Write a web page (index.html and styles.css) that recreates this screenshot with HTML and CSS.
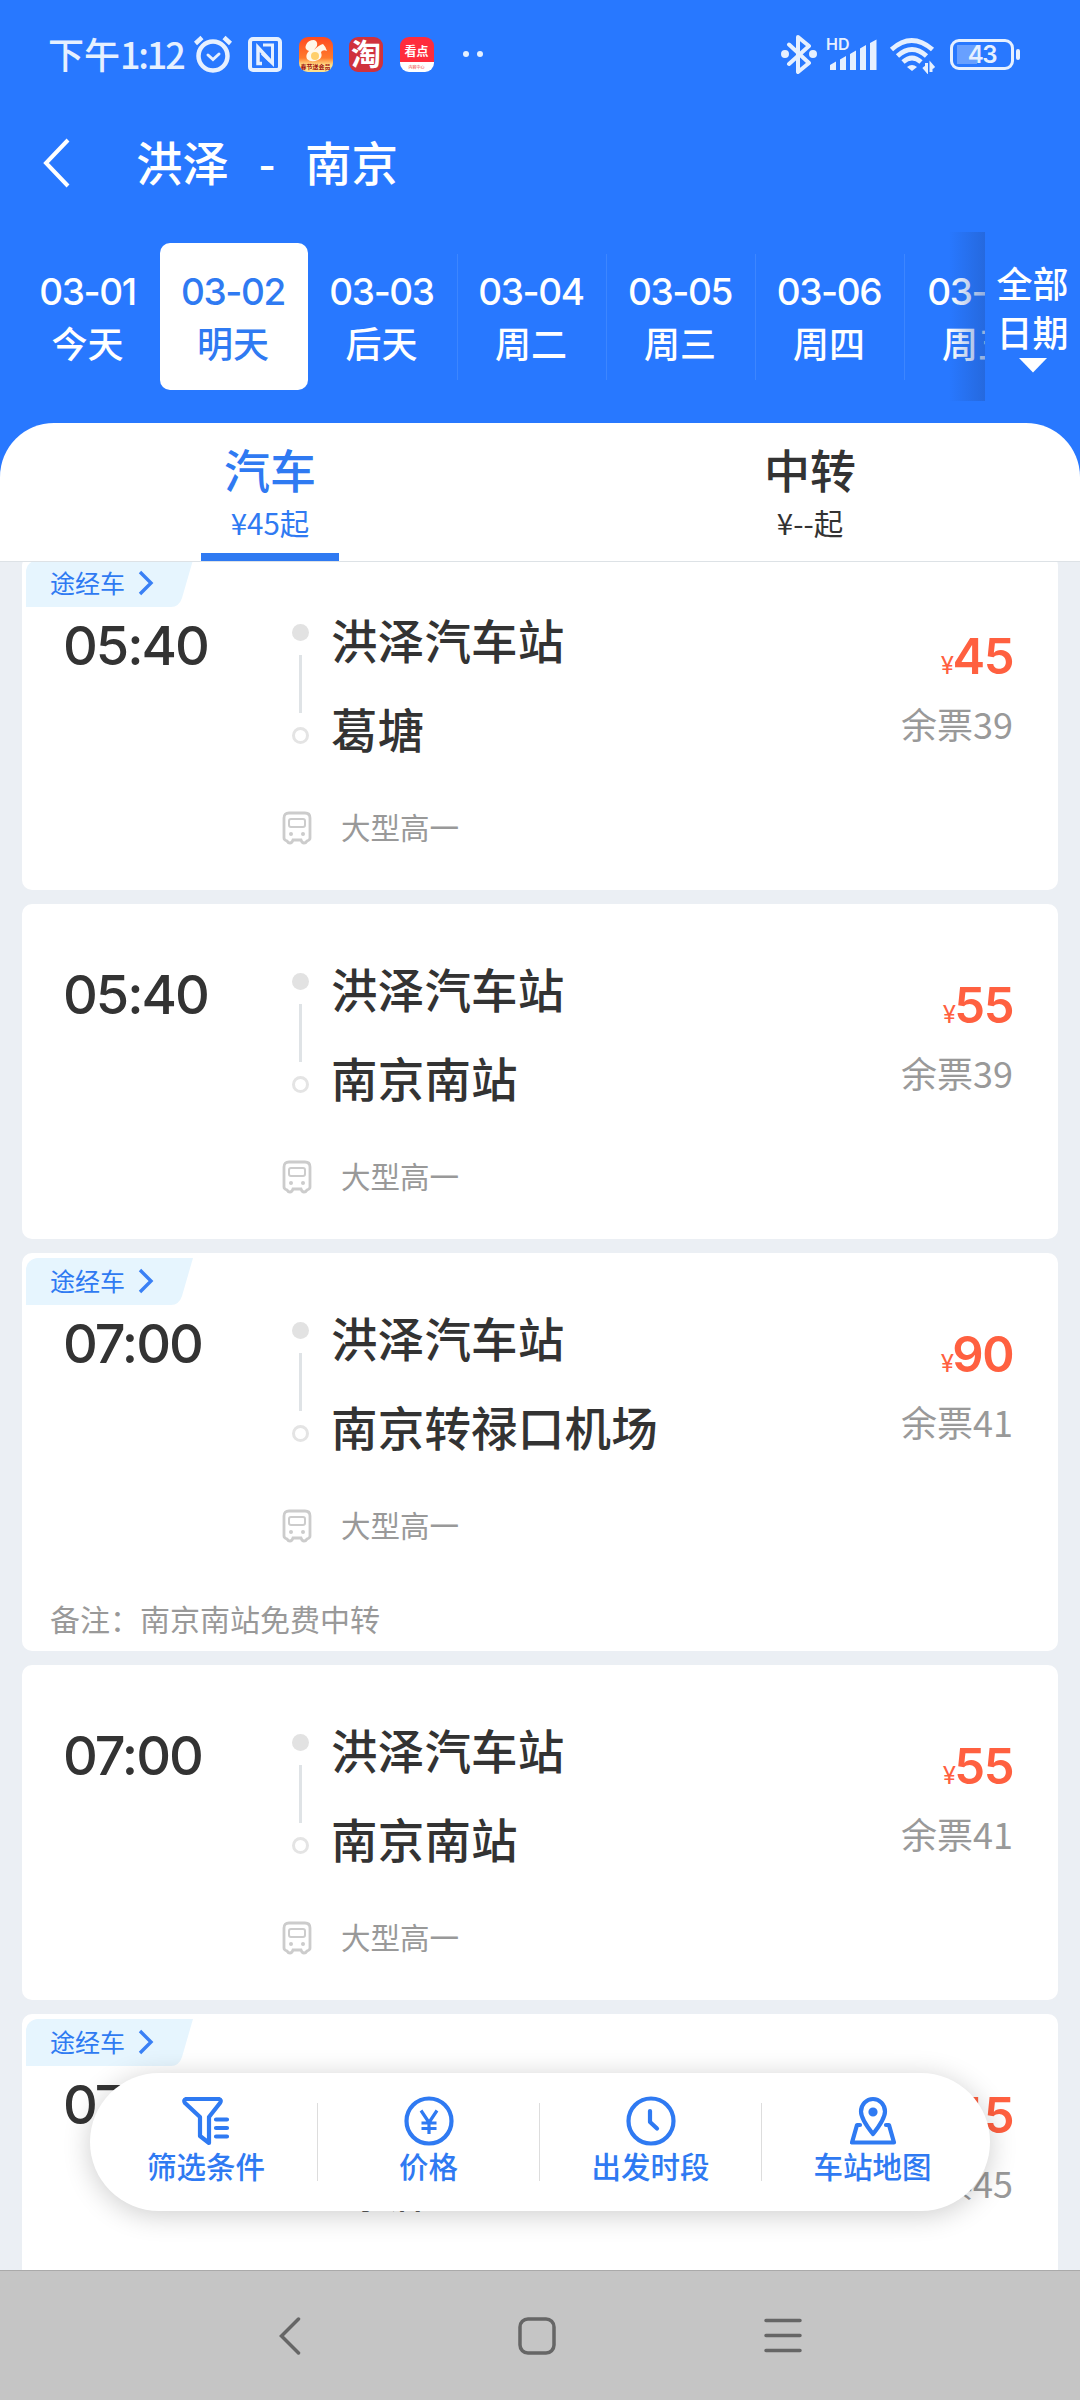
FILE: index.html
```html
<!DOCTYPE html>
<html lang="zh-CN">
<head>
    <meta charset="UTF-8">
    <meta name="viewport" content="width=device-width, initial-scale=1.0">
    <title>洪泽 - 南京</title>
    <link rel="stylesheet" href="styles.css">
</head>
<body>
    <!-- shared icons -->
    <svg class="icon-defs" width="0" height="0">
        <symbol id="icon-bus" viewBox="0 0 30 34">
            <path d="M7 2h16q5 0 5 5v20q0 2-3 3-1 2-3 2t-3-3h-8q-1 3-3 3t-3-2q-3-1-3-3V7q0-5 5-5z" fill="none" stroke="#ccc" stroke-width="2.8"/>
            <rect x="7" y="8" width="16" height="8" rx="2" fill="none" stroke="#ccc" stroke-width="2"/>
            <circle cx="9" cy="23" r="2" fill="#ccc"/>
            <circle cx="21" cy="23" r="2" fill="#ccc"/>
        </symbol>
        <symbol id="icon-more" viewBox="0 0 16 26">
            <path d="M2 2l11 11L2 24" fill="none" stroke="#3a80f5" stroke-width="3.4"/>
        </symbol>
    </svg>

    <div class="phone">
        <header class="header">
            <div class="status-bar">
                <div class="clock">下午<span class="clock-num">1:12</span></div>
                <svg class="alarm" width="40" height="38" viewBox="0 0 40 38" fill="none" stroke="#e6f0ff" stroke-linecap="round">
                    <circle cx="20" cy="21" r="14.5" stroke-width="4.5"/>
                    <path d="M15 20l5 4.500 6-5.500" stroke-width="3"/>
                    <path d="M2.500 8.500l6.500-6M37.500 8.500l-6.500-6" stroke-width="4.500" stroke-linecap="butt"/>
                </svg>
                <svg class="nfc" width="34" height="35" viewBox="0 0 34 35" fill="none" stroke="#e6f0ff">
                    <rect x="2" y="2" width="30" height="31" rx="3" stroke-width="4"/>
                    <path d="M14 26.500H10V10.500L22 23.500" stroke-width="3.500"/>
                    <path d="M15 8h9.500v18.500L14 16.500" stroke-width="3"/>
                </svg>
                <div class="app app-uc">
                    <svg width="34" height="35" viewBox="0 0 34 35">
                        <path d="M7 8q2-5 8-5 4 1 3 6l-3 4q5-5 9-6 3 3 4 7-4-2-6 1 2 6-3 8-7 3-11-1-2-4 2-8-5-2-3-6z" fill="#fff8ea"/>
                        <circle cx="16" cy="19" r="4" fill="#ffcf6b"/>
                    </svg>
                    <span>春节送会员</span>
                </div>
                <div class="app app-tao">淘</div>
                <div class="app app-kan"><b>看点</b><span>内容中心</span></div>
                <div class="more-dots"><i></i><i></i></div>

                <div class="status-right">
                    <svg class="bt" width="36" height="40" viewBox="0 0 36 40" fill="none" stroke="#e6f0ff" stroke-width="4" stroke-linejoin="round" stroke-linecap="round">
                        <path d="M8 10.500l20 18.500-11 9V3l11 9L8 30"/>
                        <circle cx="4" cy="20" r="2" fill="#e6f0ff"/>
                        <circle cx="32" cy="20" r="2" fill="#e6f0ff"/>
                    </svg>
                    <div class="signal">
                        <span class="hd">HD</span>
                        <svg width="52" height="40" viewBox="0 0 52 40" fill="#e6f0ff">
                            <path d="M3 31l6-3.500v8.500H3zM13 25.500l6-3.500v14h-6zM23 20l6-3.500V36h-6zM33 14.500l6-3.500v25h-6zM43 9l6.500-3.500V36H43z"/>
                        </svg>
                    </div>
                    <svg class="wifi" width="48" height="40" viewBox="0 0 48 40" fill="none" stroke="#e6f0ff">
                        <path d="M2.500 15.500q20-18 41 0M8.500 22q14.500-13 29 0M14 28q9-8 18 0" stroke-width="4.800"/>
                        <path d="M18 33q5-4 10 0l-5 4z" fill="#e6f0ff" stroke="none"/>
                        <path d="M37.500 29v7.500l-3-3.500M42 38v-7.500l3 3.500" stroke-width="3"/>
                    </svg>
                    <div class="battery"><span>43</span></div>
                </div>
            </div>

            <div class="title-bar">
                <svg class="back" width="28" height="50" viewBox="0 0 28 50">
                    <path d="M25 2L3 25l22 23" fill="none" stroke="#fff" stroke-width="4"/>
                </svg>
                <h1><span>洪泽</span><span class="dash">-</span><span>南京</span></h1>
            </div>

            <div class="dates">
                <div class="date-list">
                    <div class="date first"><b>03-01</b><span>今天</span></div>
                    <div class="date active"><b>03-02</b><span>明天</span></div>
                    <div class="date"><b>03-03</b><span>后天</span></div>
                    <div class="date line"><b>03-04</b><span>周二</span></div>
                    <div class="date line"><b>03-05</b><span>周三</span></div>
                    <div class="date line"><b>03-06</b><span>周四</span></div>
                    <div class="date line"><b>03-07</b><span>周五</span></div>
                </div>
                <div class="all-dates">
                    <span>全部</span>
                    <span>日期</span>
                    <svg width="28" height="15" viewBox="0 0 28 15"><path d="M0 0h28L14 14.500z" fill="#fff"/></svg>
                </div>
            </div>
        </header>

        <div class="tabs">
            <div class="tab selected">
                <b>汽车</b>
                <span>¥45起</span>
            </div>
            <div class="tab">
                <b>中转</b>
                <span>¥--起</span>
            </div>
        </div>

        <main class="list">
            <div class="card">
                <div class="tag"><span>途经车</span><svg width="16" height="26"><use href="#icon-more"/></svg></div>
                <div class="trip">
                    <div class="time">05:40</div>
                    <div class="dots"><i class="from"></i><i class="bar"></i><i class="to"></i></div>
                    <div class="stations"><p>洪泽汽车站</p><p>葛塘</p></div>
                    <div class="fare">
                        <div class="price"><small>¥</small>45</div>
                        <div class="left">余票39</div>
                    </div>
                </div>
                <div class="bus"><svg width="30" height="34"><use href="#icon-bus"/></svg><span>大型高一</span></div>
            </div>

            <div class="card">
                <div class="trip">
                    <div class="time">05:40</div>
                    <div class="dots"><i class="from"></i><i class="bar"></i><i class="to"></i></div>
                    <div class="stations"><p>洪泽汽车站</p><p>南京南站</p></div>
                    <div class="fare">
                        <div class="price"><small>¥</small>55</div>
                        <div class="left">余票39</div>
                    </div>
                </div>
                <div class="bus"><svg width="30" height="34"><use href="#icon-bus"/></svg><span>大型高一</span></div>
            </div>

            <div class="card">
                <div class="tag"><span>途经车</span><svg width="16" height="26"><use href="#icon-more"/></svg></div>
                <div class="trip">
                    <div class="time">07:00</div>
                    <div class="dots"><i class="from"></i><i class="bar"></i><i class="to"></i></div>
                    <div class="stations"><p>洪泽汽车站</p><p>南京转禄口机场</p></div>
                    <div class="fare">
                        <div class="price"><small>¥</small>90</div>
                        <div class="left">余票41</div>
                    </div>
                </div>
                <div class="bus"><svg width="30" height="34"><use href="#icon-bus"/></svg><span>大型高一</span></div>
                <div class="remark">备注：南京南站免费中转</div>
            </div>

            <div class="card">
                <div class="trip">
                    <div class="time">07:00</div>
                    <div class="dots"><i class="from"></i><i class="bar"></i><i class="to"></i></div>
                    <div class="stations"><p>洪泽汽车站</p><p>南京南站</p></div>
                    <div class="fare">
                        <div class="price"><small>¥</small>55</div>
                        <div class="left">余票41</div>
                    </div>
                </div>
                <div class="bus"><svg width="30" height="34"><use href="#icon-bus"/></svg><span>大型高一</span></div>
            </div>

            <div class="card">
                <div class="tag"><span>途经车</span><svg width="16" height="26"><use href="#icon-more"/></svg></div>
                <div class="trip">
                    <div class="time">07:00</div>
                    <div class="dots"><i class="from"></i><i class="bar"></i><i class="to"></i></div>
                    <div class="stations"><p>洪泽汽车站</p><p>葛塘</p></div>
                    <div class="fare">
                        <div class="price"><small>¥</small>45</div>
                        <div class="left">余票45</div>
                    </div>
                </div>
                <div class="bus"><svg width="30" height="34"><use href="#icon-bus"/></svg><span>大型高一</span></div>
            </div>
        </main>

        <!-- floating filter bar -->
        <div class="filter-bar">
            <div class="filter">
                <svg width="50" height="50" viewBox="0 0 50 50" fill="none" stroke="#2f7af2" stroke-width="4.2" stroke-linecap="round" stroke-linejoin="round">
                    <path d="M5 3h33q3 1 1 4L28 21v26l-9-7V21L4 7Q2 4 5 3z"/>
                    <path d="M35 23.500h11M35 32h11M35 40.500h11"/>
                </svg>
                <span>筛选条件</span>
            </div>
            <div class="filter">
                <svg width="50" height="50" viewBox="0 0 50 50" fill="none" stroke="#2f7af2" stroke-width="4.2">
                    <circle cx="25" cy="25" r="22.500"/>
                    <path d="M17 14.500l8 12 8-12M25 26v12M17.500 27h15M17.500 32.500h15" stroke-width="3.2"/>
                </svg>
                <span>价格</span>
            </div>
            <div class="filter">
                <svg width="50" height="50" viewBox="0 0 50 50" fill="none" stroke="#2f7af2" stroke-width="4.2" stroke-linecap="round" stroke-linejoin="round">
                    <circle cx="25" cy="25" r="22.500"/>
                    <path d="M24 15v11l7 6.500"/>
                </svg>
                <span>出发时段</span>
            </div>
            <div class="filter">
                <svg width="50" height="50" viewBox="0 0 50 50" fill="none" stroke="#2f7af2" stroke-width="4.2" stroke-linecap="round" stroke-linejoin="round">
                    <path d="M25 38Q13 23 13 15.500a12 12.500 0 0 1 24 0Q37 23 25 38z"/>
                    <circle cx="25" cy="16" r="2.500" fill="#2f7af2"/>
                    <path d="M12 29H9L4 46.500h42L41 29h-3"/>
                </svg>
                <span>车站地图</span>
            </div>
        </div>

        <footer class="nav-bar">
            <svg width="38" height="38" viewBox="0 0 38 38" fill="none" stroke="#666" stroke-width="3.500" stroke-linecap="round"><path d="M26.500 2L9.500 19l17 17"/></svg>
            <svg width="38" height="38" viewBox="0 0 38 38" fill="none" stroke="#666" stroke-width="3.500"><rect x="2" y="2" width="34" height="34" rx="8"/></svg>
            <svg width="38" height="38" viewBox="0 0 38 38" fill="none" stroke="#666" stroke-width="3.500" stroke-linecap="round"><path d="M2 3.500h34M2 18.500h34M2 33.500h34"/></svg>
        </footer>
    </div>
</body>
</html>
```
FILE: styles.css
```css
* {
    box-sizing: border-box;
}
body {
    margin: 0;
    font-family: "Noto Sans CJK SC", sans-serif;
    background-color: #ebeff4;
}
h1, p {
    margin: 0;
}
svg {
    display: block;
    flex-shrink: 0;
}
.icon-defs {
    position: absolute;
}
.phone {
    position: relative;
    display: flex;
    flex-direction: column;
    width: 1080px;
    height: 2400px;
    overflow: hidden;
}

/* header */
.header {
    height: 477px;
    background-color: #2878ff;
    color: #fff;
    flex-shrink: 0;
}
.status-bar {
    display: flex;
    align-items: center;
    height: 108px;
    padding-left: 48px;
    padding-right: 66px;
    color: #e6f0ff;
}
.clock {
    width: 145px;
    padding-bottom: 3px;
    font-size: 36px;
    font-weight: 500;
    white-space: nowrap;
}
.clock-num {
    letter-spacing: -2.2px;
}
.nfc {
    margin-left: 15px;
}
.app {
    width: 34px;
    height: 35px;
    margin-left: 16.500px;
    border-radius: 9px;
    overflow: hidden;
    text-align: center;
}
.app-uc {
    background: linear-gradient(#ff4a20 0%, #ff7a2c 60%, #ffe08a 80%);
    font-size: 6px;
    line-height: 8px;
    color: #a01010;
    font-weight: bold;
    white-space: nowrap;
}
.app-uc svg {
    margin-bottom: -9px;
}
.app-uc span {
    display: block;
}
.app-tao {
    background-color: #d0323c;
    color: #fff;
    font-size: 30px;
    line-height: 31px;
    font-weight: bold;
}
.app-kan {
    background: linear-gradient(#ff2c3c 72%, #fff 72%);
    color: #fff;
}
.app-kan b {
    display: block;
    font-size: 12px;
    line-height: 28px;
}
.app-kan span {
    display: block;
    font-size: 4px;
    line-height: 5px;
    color: #e33;
}
.more-dots {
    display: flex;
    gap: 8px;
    margin-left: 29px;
}
.more-dots i {
    width: 6px;
    height: 6px;
    border-radius: 50%;
    background-color: #e6f0ff;
}
.status-right {
    display: flex;
    align-items: center;
    margin-left: auto;
}
.signal {
    position: relative;
    margin-left: 10px;
}
.hd {
    position: absolute;
    left: -1px;
    top: 1px;
    font: 600 16px/18px Inter, sans-serif;
}
.wifi {
    margin-left: 10px;
}
.battery {
    position: relative;
    width: 64px;
    height: 31px;
    margin-left: 13px;
    border: 3px solid #e6f0ff;
    border-radius: 9px;
    background: linear-gradient(#68a0ff, #68a0ff) 4px 3px / 20px 19px no-repeat;
    text-align: center;
    font: 600 24px/25px Inter, sans-serif;
    letter-spacing: -1.500px;
}
.battery::after {
    content: "";
    position: absolute;
    right: -9px;
    top: 7px;
    width: 4px;
    height: 11px;
    border-radius: 2px;
    background-color: #e6f0ff;
}
.title-bar {
    display: flex;
    align-items: center;
    height: 110px;
    padding-left: 43px;
}
.title-bar h1 {
    display: flex;
    margin-left: 65px;
    padding-bottom: 5px;
    font-size: 46.500px;
    line-height: 60px;
    font-weight: 500;
}
.title-bar .dash {
    width: 76px;
    text-align: center;
}

/* date strip */
.dates {
    display: flex;
    height: 169px;
    margin-top: 14px;
}
.date-list {
    position: relative;
    display: flex;
    align-items: center;
    width: 985px;
    padding: 0 0 0 12px;
    overflow: hidden;
}
.date-list::after {
    content: "";
    position: absolute;
    right: 0;
    top: 0;
    width: 36px;
    height: 169px;
    background: linear-gradient(to right, rgba(40, 90, 180, 0), rgba(35, 90, 190, 0.500));
}
.date {
    display: flex;
    flex-direction: column;
    flex-shrink: 0;
    align-items: center;
    justify-content: center;
    width: 149px;
    height: 126px;
    padding-right: 2px;
    font-size: 36px;
    font-weight: 500;
}
.date.first {
    width: 148px;
    padding: 0 0 0 3px;
}
.date.active {
    width: 148px;
    height: 147px;
    border-radius: 10px;
    background-color: #fff;
    color: #2f7af2;
}
.date.line {
    border-left: 1px solid #3d86ff;
}
.date b {
    font: 500 37px/54px Inter, sans-serif;
    letter-spacing: -1.400px;
}
.date span {
    margin-top: -4px;
    line-height: 54px;
}
.all-dates {
    display: flex;
    flex-direction: column;
    align-items: center;
    width: 95px;
    padding-top: 26px;
    font-size: 36px;
    line-height: 49px;
    font-weight: 500;
}
.all-dates svg {
    margin-top: 2px;
}

/* tabs */
.tabs {
    position: relative;
    z-index: 1;
    display: flex;
    flex-shrink: 0;
    height: 139px;
    margin-top: -54px;
    border-bottom: 1px solid #dde2e6;
    border-radius: 54px 54px 0 0;
    background-color: #fff;
}
.tab {
    position: relative;
    display: flex;
    flex-direction: column;
    align-items: center;
    width: 50%;
    padding-top: 13px;
    color: #333;
}
.tab b {
    font-size: 46px;
    line-height: 64px;
    font-weight: 500;
}
.tab span {
    margin-top: 2px;
    font-size: 29.500px;
    line-height: 40px;
}
.tab.selected {
    color: #2f7af2;
}
.tab.selected::after {
    content: "";
    position: absolute;
    bottom: 0;
    width: 138px;
    height: 8px;
    background-color: #2f7af2;
}

/* trips */
.list {
    display: flex;
    flex-direction: column;
    gap: 14px;
    height: 1715px;
    margin-top: -7px;
    padding: 0 22px;
    overflow: hidden;
}
.card {
    position: relative;
    flex-shrink: 0;
    padding-top: 39px;
    border-radius: 10px;
    background-color: #fff;
    color: #333;
}
.tag {
    position: absolute;
    left: 4px;
    top: 5px;
    display: flex;
    align-items: center;
    gap: 13px;
    width: 167px;
    height: 47px;
    padding-left: 24px;
    border-radius: 12px 0 0 0;
    background-color: #e6f5fe;
    clip-path: path("M0 0H167L156 38Q153 47 145 47H0z");
    color: #2f7af2;
    font-size: 25px;
}
.tag span {
    padding-bottom: 4px;
}
.tag svg {
    margin-bottom: 1px;
}
.trip {
    display: flex;
    height: 178px;
}
.time {
    width: 270px;
    padding: 4px 0 0 41px;
    font: 500 54px/96px Inter, sans-serif;
    letter-spacing: -2px;
}
.dots {
    display: flex;
    flex-direction: column;
    align-items: center;
    gap: 14px;
    width: 17px;
    padding-top: 30px;
}
.dots i {
    width: 17px;
    height: 17px;
    border-radius: 50%;
}
.dots .from {
    background-color: #e2e2e2;
}
.dots .bar {
    width: 3px;
    height: 58px;
    border-radius: 0;
    background-color: #dfe3e6;
}
.dots .to {
    border: 3px solid #e4e4e4;
}
.stations {
    margin-left: 22px;
    font-size: 46.500px;
    line-height: 89px;
    font-weight: 500;
    letter-spacing: 0.200px;
}
.fare {
    margin-left: auto;
    padding: 29px 45px 0 0;
    text-align: right;
}
.price {
    height: 67px;
    color: #ff6040;
    font: 600 49px/68px Inter, sans-serif;
    letter-spacing: -1.500px;
}
.price small {
    font-size: 24px;
    font-weight: 400;
}
.left {
    color: #999;
    font-size: 36px;
    line-height: 66px;
}
.bus {
    display: flex;
    align-items: center;
    gap: 29px;
    height: 60px;
    margin: 26px 0 32px;
    padding-left: 260px;
    color: #999;
    font-size: 29.500px;
}
.bus span {
    padding-bottom: 5px;
}
.remark {
    height: 63px;
    padding-left: 28px;
    color: #999;
    font-size: 30px;
    line-height: 60px;
}

/* filter bar sits over the list */
.filter-bar {
    position: absolute;
    left: 90px;
    top: 2073px;
    display: flex;
    align-items: center;
    width: 900px;
    height: 138px;
    padding: 0 7px 0 5px;
    border-radius: 69px;
    background-color: #fff;
    box-shadow: 0 4px 28px rgba(0, 0, 0, 0.200);
}
.filter {
    display: flex;
    flex-direction: column;
    align-items: center;
    width: 222px;
    height: 78px;
    border-left: 1px solid #ddd;
    color: #2f7af2;
    font-size: 29.500px;
    font-weight: 500;
}
.filter:first-child {
    border-left: none;
}
.filter svg {
    margin-top: -7px;
}
.filter span {
    line-height: 39px;
}

/* system navigation */
.nav-bar {
    display: flex;
    justify-content: center;
    align-items: center;
    gap: 208px;
    height: 130px;
    padding-right: 7px;
    border-top: 1px solid #aaa;
    background-color: #c5c5c5;
}
```
